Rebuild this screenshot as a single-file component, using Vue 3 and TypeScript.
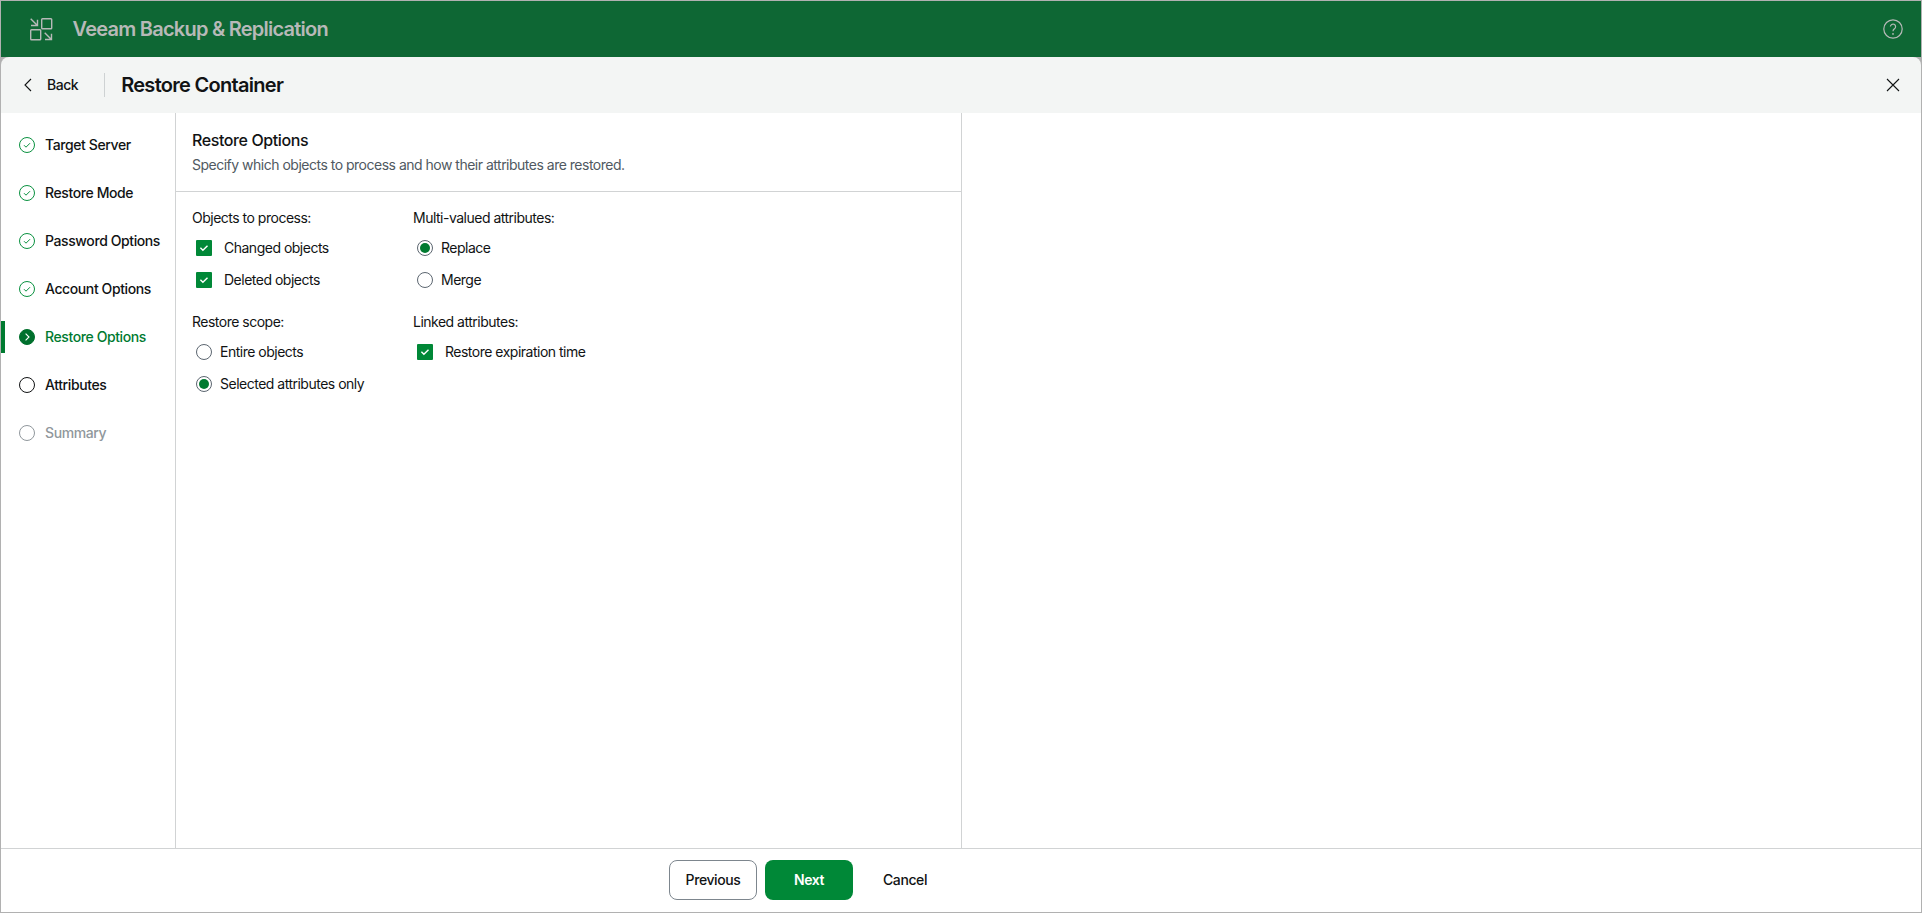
<script setup lang="ts">
import { ref } from 'vue'

type StepState = 'done' | 'current' | 'open' | 'disabled'
interface Step { label: string; state: StepState }
interface Option { label: string; checked: boolean }
interface Group { title: string; kind: 'checkbox' | 'radio'; options: Option[] }

const steps: Step[] = [
  { label: 'Target Server', state: 'done' },
  { label: 'Restore Mode', state: 'done' },
  { label: 'Password Options', state: 'done' },
  { label: 'Account Options', state: 'done' },
  { label: 'Restore Options', state: 'current' },
  { label: 'Attributes', state: 'open' },
  { label: 'Summary', state: 'disabled' },
]

const groups = ref<Group[]>([
  { title: 'Objects to process:', kind: 'checkbox', options: [
    { label: 'Changed objects', checked: true },
    { label: 'Deleted objects', checked: true },
  ] },
  { title: 'Multi-valued attributes:', kind: 'radio', options: [
    { label: 'Replace', checked: true },
    { label: 'Merge', checked: false },
  ] },
  { title: 'Restore scope:', kind: 'radio', options: [
    { label: 'Entire objects', checked: false },
    { label: 'Selected attributes only', checked: true },
  ] },
  { title: 'Linked attributes:', kind: 'checkbox', options: [
    { label: 'Restore expiration time', checked: true },
  ] },
])

function choose(group: Group, option: Option) {
  if (group.kind === 'checkbox') option.checked = !option.checked
  else group.options.forEach((o) => { o.checked = o === option })
}
</script>

<template>
  <div class="window">
    <header class="topbar">
      <svg class="logo" width="24" height="24" viewBox="0 0 24 24" fill="none" stroke="currentColor" stroke-width="1.4">
        <rect x="12.7" y="1.7" width="10" height="10" rx="0.8" />
        <rect x="1.7" y="12.7" width="10" height="10" rx="0.8" />
        <path d="M1.7 1.7 8.4 8.4M8.5 2.8v5.7H2" />
        <path d="M15.7 15.7l6.7 6.7M22.5 16.8v5.7H16" />
      </svg>
      <span class="product">Veeam Backup &amp; Replication</span>
      <svg class="help" width="20" height="20" viewBox="0 0 20 20" fill="none" stroke="currentColor" stroke-width="1.2">
        <circle cx="10" cy="10" r="9.2" />
        <path d="M7.4 7.6a2.6 2.6 0 1 1 4.2 2.1c-1 .8-1.6 1.2-1.6 2.5" />
        <circle cx="10" cy="14.9" r="0.9" fill="currentColor" stroke="none" />
      </svg>
    </header>

    <div class="titlewrap">
      <div class="titlebar">
        <button class="back" type="button">
          <svg width="8" height="14" viewBox="0 0 8 14" fill="none" stroke="currentColor" stroke-width="1.1"><path d="M7 1 1 7l6 6" /></svg>
          <span>Back</span>
        </button>
        <i class="sep"></i>
        <h1>Restore Container</h1>
        <svg class="close" width="14" height="14" viewBox="0 0 14 14" fill="none" stroke="currentColor" stroke-width="1.1"><path d="M1 1l12 12M13 1 1 13" /></svg>
      </div>
    </div>

    <main class="main">
      <nav class="steps">
        <div v-for="step in steps" :key="step.label" class="step" :class="step.state">
          <svg width="16" height="16" viewBox="0 0 16 16" fill="none">
            <circle class="ring" cx="8" cy="8" r="7.5" />
            <path v-if="step.state === 'done'" d="M5 8.2l2 2 4-4" stroke="#0a9140" />
            <path v-if="step.state === 'current'" d="M6.6 4.6 10 8l-3.4 3.4" stroke="#fff" stroke-width="1.1" />
          </svg>
          <span>{{ step.label }}</span>
        </div>
      </nav>

      <section class="panel">
        <div class="panel-head">
          <h2>Restore Options</h2>
          <p>Specify which objects to process and how their attributes are restored.</p>
        </div>
        <div class="groups">
          <div v-for="group in groups" :key="group.title" class="group">
            <div class="group-title">{{ group.title }}</div>
            <div v-for="option in group.options" :key="option.label" class="option" :class="group.kind" @click="choose(group, option)">
              <svg v-if="group.kind === 'checkbox'" width="16" height="16" viewBox="0 0 16 16" fill="none">
                <rect v-if="option.checked" width="16" height="16" rx="1" fill="#008837" />
                <rect v-else x="0.5" y="0.5" width="15" height="15" rx="1" stroke="#57616b" />
                <path v-if="option.checked" d="M4.4 7.8l2.5 2.5 4.6-4.6" stroke="#fff" stroke-width="1.4" />
              </svg>
              <svg v-else width="16" height="16" viewBox="0 0 16 16" fill="none">
                <circle cx="8" cy="8" r="7.5" stroke="#5c6670" />
                <circle v-if="option.checked" cx="8" cy="8" r="5" fill="#007a30" />
              </svg>
              <span>{{ option.label }}</span>
            </div>
          </div>
        </div>
      </section>
    </main>

    <footer class="footer">
      <button class="btn outline" type="button">Previous</button>
      <button class="btn primary" type="button">Next</button>
      <button class="btn plain" type="button">Cancel</button>
    </footer>
  </div>
</template>

<style>
body { margin: 0; }
</style>

<style scoped>
.window {
  box-sizing: border-box;
  height: 100vh;
  display: flex;
  flex-direction: column;
  border: 1px solid #b1b1b1;
  background: #fff;
  color: #111314;
  font: 400 14px/20px Inter, "Liberation Sans", sans-serif;
  letter-spacing: -0.5px;
}
h1, h2, p { margin: 0; }
button { border: 0; background: none; padding: 0; color: inherit; font: inherit; letter-spacing: inherit; }
svg { display: block; flex: none; }
.topbar {
  height: 56px;
  flex: none;
  display: flex;
  align-items: center;
  padding: 0 18px 0 28px;
  background: #0e6734;
  color: #b7b9b8;
}
.product { margin-left: 19.5px; font-size: 20px; font-weight: 600; letter-spacing: -0.756px; }
.help { margin-left: auto; }
.titlewrap { flex: none; background: #b1b1b1; }
.titlebar {
  height: 56px;
  display: flex;
  align-items: center;
  padding: 0 21px 0 23px;
  border-radius: 8px 8px 0 0;
  background: #f3f5f4;
}
.back { display: flex; align-items: center; gap: 15px; font-weight: 450; letter-spacing: -0.47px; }
.sep { width: 1px; height: 24px; margin-left: 26px; background: #ced2d3; }
h1 { margin-left: 16px; font-size: 20px; font-weight: 600; letter-spacing: -0.71px; }
.close { margin-left: auto; }
.main { flex: 1; display: flex; min-height: 0; }
.steps { box-sizing: border-box; width: 175px; padding-top: 16px; border-right: 1px solid #d1d3d4; }
.step {
  box-sizing: border-box;
  height: 32px;
  margin-bottom: 16px;
  display: flex;
  align-items: center;
  gap: 10px;
  padding-left: 18px;
  font-weight: 450;
  letter-spacing: -0.4px;
}
.ring { stroke: #111314; }
.done .ring { stroke: #0a9140; }
.current { padding-left: 14px; border-left: 4px solid #007a30; border-radius: 0 2px 2px 0; color: #007a30; }
.current .ring { stroke: #00702d; fill: #00702d; }
.disabled { color: #90979c; }
.disabled .ring { stroke: #90979c; }
.panel { box-sizing: border-box; width: 786px; border-right: 1px solid #d1d3d4; }
.panel-head { box-sizing: border-box; height: 79px; padding: 17px 16px 0; border-bottom: 1px solid #d1d3d4; }
h2 { font-size: 16px; line-height: 20px; font-weight: 450; letter-spacing: -0.4px; }
.panel-head p { margin-top: 5px; color: #505961; }
.groups { display: grid; grid-template-columns: 221px 221px; row-gap: 16px; padding: 16px; }
.group-title { height: 20px; margin-bottom: 4px; }
.option { height: 32px; display: flex; align-items: center; gap: 8px; padding-left: 4px; }
.option.checkbox { gap: 12px; }
.footer {
  box-sizing: border-box;
  height: 64px;
  flex: none;
  display: flex;
  gap: 8px;
  padding: 11px 0 0 668px;
  border-top: 1px solid #d1d3d4;
}
.btn { box-sizing: border-box; width: 88px; height: 40px; border-radius: 8px; font-weight: 450; letter-spacing: -0.41px; }
.outline { border: 1px solid #7d868e; }
.primary { background: #008837; color: #fff; font-weight: 600; letter-spacing: -0.47px; }
</style>
